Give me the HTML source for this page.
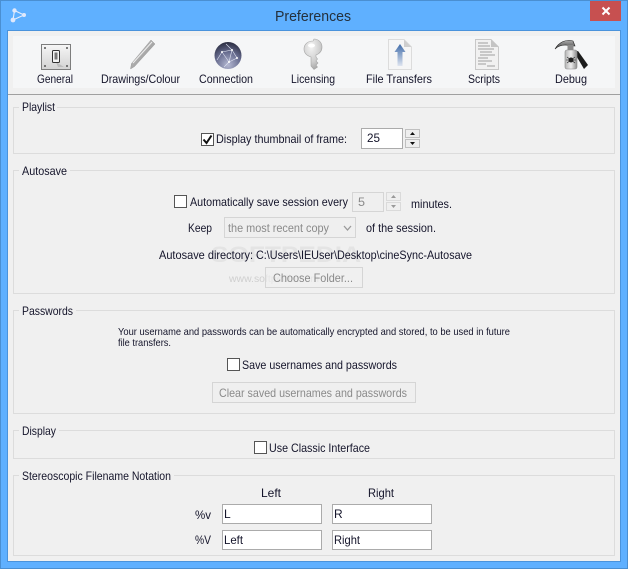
<!DOCTYPE html>
<html><head><meta charset="utf-8"><title>Preferences</title>
<style>
html,body{margin:0;padding:0;background:#5fb0ff;width:628px;height:569px;overflow:hidden}
svg{display:block}
text{font-family:"Liberation Sans",sans-serif;font-size:12px;fill:#14142a}
.g{fill:#8a8a8a}
.gb{fill:none;stroke:#dcdcdc}
.in{fill:#fff;stroke:#ababab}
.d{fill:#efefef;stroke:#d5d5d5}
.s{font-size:10.5px}
</style></head><body>
<svg width="628" height="569" viewBox="0 0 628 569" xmlns="http://www.w3.org/2000/svg">
<defs>
<linearGradient id="pl" x1="0" y1="0" x2="0" y2="1"><stop offset="0" stop-color="#f6f6f6"/><stop offset="1" stop-color="#d2d2d2"/></linearGradient>
<linearGradient id="pen" x1="0" y1="0" x2="1" y2="1"><stop offset="0" stop-color="#cfcfcf"/><stop offset="1" stop-color="#858585"/></linearGradient>
<radialGradient id="gl" cx=".5" cy=".85" r=".85"><stop offset="0" stop-color="#b4b8d2"/><stop offset=".55" stop-color="#686d90"/><stop offset="1" stop-color="#2a2c40"/></radialGradient>
<radialGradient id="ky" cx=".4" cy=".25" r=".85"><stop offset="0" stop-color="#f4f4f4"/><stop offset=".6" stop-color="#cdcdcd"/><stop offset="1" stop-color="#9a9a9a"/></radialGradient>
<linearGradient id="ar" x1="0" y1="0" x2="0" y2="1"><stop offset="0" stop-color="#3f6ba8"/><stop offset="1" stop-color="#dfe5f0"/></linearGradient>
<linearGradient id="cn" x1="0" y1="0" x2="1" y2="0"><stop offset="0" stop-color="#b4b4b4"/><stop offset=".5" stop-color="#eee"/><stop offset="1" stop-color="#8c8c8c"/></linearGradient>
<linearGradient id="hm" x1="0" y1="0" x2="0" y2="1"><stop offset="0" stop-color="#aaa"/><stop offset="1" stop-color="#444"/></linearGradient>
<filter id="soft" x="-10%" y="-10%" width="120%" height="120%"><feGaussianBlur stdDeviation=".35"/></filter>
</defs>

<!-- window frame -->
<rect x="0.5" y="0.5" width="627" height="568" fill="#5fb0ff" stroke="#4a8fd2"/>
<rect x="8" y="31" width="613" height="531" fill="#f0f0f0"/>
<path d="M7.500 561.500V30.500H620.500V561.500Z" fill="none" stroke="#4a93dc"/>

<!-- logo -->
<g stroke="#e8eefc" stroke-width="1.100" fill="none"><path d="M14.500 10.500L24 15L13 20Z"/></g>
<circle cx="14.500" cy="10.500" r="2.200" fill="#dfe8fb"/><circle cx="24" cy="15" r="2" fill="#dfe8fb"/><circle cx="13" cy="20" r="2.400" fill="#dfe8fb"/>

<!-- title + close -->
<text x="275" y="21" style="font-size:15px;fill:#24303c" textLength="76" lengthAdjust="spacingAndGlyphs">Preferences</text>
<rect x="590" y="1" width="31" height="20" fill="#c75050"/>
<path d="M602.500 7.500L609.500 14.500M609.500 7.500L602.500 14.500" stroke="#fff" stroke-width="2"/>

<!-- toolbar -->
<rect x="13" y="36" width="602" height="52" fill="#f5f6f7"/>
<rect x="8" y="94" width="612" height="1" fill="#a0a0a0"/>

<g filter="url(#soft)">
<!-- General icon -->
<rect x="41.500" y="44.500" width="29" height="25" fill="url(#pl)" stroke="#7d7d7d"/>
<circle cx="45" cy="48" r="1" fill="#555"/><circle cx="67" cy="48" r="1" fill="#555"/><circle cx="45" cy="66" r="1" fill="#555"/><circle cx="67" cy="66" r="1" fill="#555"/>
<path d="M56 62L64 67L58 67Z" fill="#bbb"/>
<rect x="52.500" y="50.500" width="7" height="12" rx="1" fill="#f5f5f5" stroke="#333"/>
<rect x="54.500" y="52.500" width="3" height="7" fill="#777"/>

<!-- Pencil icon -->
<path d="M151 40L155 44L134.500 66.500L130.500 69L131.500 63.500Z" fill="url(#pen)" stroke="#9a9a9a" stroke-width=".5"/>
<path d="M152 42L133 63" stroke="#eee" stroke-width="1"/>

<!-- Globe icon -->
<circle cx="228" cy="55.500" r="13.500" fill="url(#gl)"/>
<g stroke="#dfe3f2" stroke-width=".6" fill="none"><path d="M222 52L232 50L237 58L229 62L222 52L217 60M232 50L229 62M229 62L224 67M232 50L226 44"/></g>
<g fill="#fff"><circle cx="222" cy="52" r="1"/><circle cx="232" cy="50" r="1"/><circle cx="237" cy="58" r="1"/><circle cx="229" cy="62" r="1"/></g>

<!-- Key icon -->
<path d="M313 41c-5.500 0-9 3.500-9 8c0 3.500 2.500 6.500 7 8V66l3 3.500l3.500-2.500l-1.500-2l2-2l-2-2l1.500-2l-1.500-2v-2c4-1.500 6-4.500 6-8c0-4.500-3.500-8-8-8Z" fill="url(#ky)" stroke="#a5a5a5" stroke-width=".6"/>
<ellipse cx="311.500" cy="45.500" rx="3.500" ry="2" fill="#fff"/>

<!-- File Transfers icon -->
<path d="M388.500 39.500H404L411.500 47V69.500H388.500Z" fill="#f6f6f6" stroke="#dcdcdc"/>
<path d="M404 39.500V47H411.500Z" fill="#cfcfcf"/>
<path d="M400 44L405.500 52H402.500V66H397.500V52H394.500Z" fill="url(#ar)"/>

<!-- Scripts icon -->
<path d="M475.500 39.500H491L498.500 47V69.500H475.500Z" fill="#f1f1f1" stroke="#c8c8c8"/>
<path d="M491 39.500V47H498.500Z" fill="#c4c4c4"/>
<path d="M478 43h10M478 46h12M478 49h16M480 52h12M480 55h15M478 58h10M478 61h14M478 64h8M487 66h8" stroke="#a0a0a0" stroke-width=".9"/>

<!-- Debug icon -->
<path d="M574 52L578 51L588 65L584 69Z" fill="#1c1c1c"/>
<path d="M555 49C559 42 566 39 573 41L575 46L570 46L566 45C562 45 558 46 555 49Z" fill="url(#hm)" stroke="#222" stroke-width=".6"/>
<rect x="567.500" y="45" width="6" height="6" fill="#8a8a8a"/>
<rect x="565" y="50" width="12" height="19" rx="2" fill="url(#cn)" stroke="#8a8a8a" stroke-width=".6"/>
<circle cx="571" cy="60" r="2.500" fill="#222"/>
<path d="M567 57l8 6M575 57l-8 6M566 60h10" stroke="#222" stroke-width=".6"/>
</g>

<!-- toolbar labels -->
<text x="37" y="83" textLength="36" lengthAdjust="spacingAndGlyphs">General</text>
<text x="101" y="83" textLength="79" lengthAdjust="spacingAndGlyphs">Drawings/Colour</text>
<text x="199" y="83" textLength="54" lengthAdjust="spacingAndGlyphs">Connection</text>
<text x="291" y="83" textLength="44" lengthAdjust="spacingAndGlyphs">Licensing</text>
<text x="366" y="83" textLength="66" lengthAdjust="spacingAndGlyphs">File Transfers</text>
<text x="468" y="83" textLength="32" lengthAdjust="spacingAndGlyphs">Scripts</text>
<text x="555" y="83" textLength="32" lengthAdjust="spacingAndGlyphs">Debug</text>

<!-- group boxes -->
<rect class="gb" x="13.500" y="107.500" width="601" height="46"/>
<rect class="gb" x="13.500" y="170.500" width="601" height="123"/>
<rect class="gb" x="13.500" y="310.500" width="601" height="103"/>
<rect class="gb" x="13.500" y="430.500" width="601" height="28"/>
<rect class="gb" x="13.500" y="475.500" width="601" height="80"/>
<rect x="19" y="102" width="38" height="12" fill="#f0f0f0"/>
<rect x="19" y="165" width="51" height="12" fill="#f0f0f0"/>
<rect x="19" y="305" width="57" height="12" fill="#f0f0f0"/>
<rect x="19" y="425" width="40" height="12" fill="#f0f0f0"/>
<rect x="19" y="470" width="155" height="12" fill="#f0f0f0"/>
<text x="22" y="111" textLength="33" lengthAdjust="spacingAndGlyphs">Playlist</text>
<text x="22" y="175" textLength="45" lengthAdjust="spacingAndGlyphs">Autosave</text>
<text x="22" y="315" textLength="51" lengthAdjust="spacingAndGlyphs">Passwords</text>
<text x="22" y="435" textLength="34" lengthAdjust="spacingAndGlyphs">Display</text>
<text x="22" y="480" textLength="149" lengthAdjust="spacingAndGlyphs">Stereoscopic Filename Notation</text>

<!-- Playlist -->
<rect x="201.500" y="133.500" width="12" height="12" fill="#fff" stroke="#555"/>
<path d="M203.500 139.500L206.500 143L211.500 135.500" fill="none" stroke="#111" stroke-width="2"/>
<text x="216" y="143" textLength="131" lengthAdjust="spacingAndGlyphs">Display thumbnail of frame:</text>
<rect class="in" x="361.500" y="128.500" width="41" height="20"/>
<text x="367" y="142" textLength="13" lengthAdjust="spacingAndGlyphs">25</text>
<rect x="405.500" y="129.500" width="14" height="8" fill="#eee" stroke="#c0c0c0"/>
<rect x="405.500" y="139.500" width="14" height="8" fill="#eee" stroke="#c0c0c0"/>
<path d="M410 135L412.500 132L415 135Z" fill="#111"/><path d="M410 142L412.500 145L415 142Z" fill="#111"/>

<!-- Autosave -->
<rect x="174.500" y="195.500" width="12" height="12" fill="#fff" stroke="#555"/>
<text x="190" y="206" textLength="158" lengthAdjust="spacingAndGlyphs">Automatically save session every</text>
<rect class="d" x="352.500" y="192.500" width="31" height="19"/>
<text x="358" y="206" class="g" textLength="7" lengthAdjust="spacingAndGlyphs">5</text>
<rect x="386.500" y="192.500" width="14" height="8" fill="#efefef" stroke="#dadada"/>
<rect x="386.500" y="202.500" width="14" height="8" fill="#efefef" stroke="#dadada"/>
<path d="M391 198L393.500 195L396 198Z" fill="#999"/><path d="M391 205L393.500 208L396 205Z" fill="#999"/>
<text x="411" y="208" textLength="41" lengthAdjust="spacingAndGlyphs">minutes.</text>
<text x="188" y="232" textLength="24" lengthAdjust="spacingAndGlyphs">Keep</text>
<rect class="d" x="224.500" y="217.500" width="131" height="20"/>
<text x="228" y="232" class="g" textLength="101" lengthAdjust="spacingAndGlyphs">the most recent copy</text>
<path d="M344 226L347.500 230L351 226" fill="none" stroke="#9a9a9a" stroke-width="1.300"/>
<text x="366" y="232" textLength="70" lengthAdjust="spacingAndGlyphs">of the session.</text>
<text x="211" y="262" style="font-size:22px;font-weight:bold;fill:#e4e4e4" textLength="150" lengthAdjust="spacingAndGlyphs">SOFTPEDIA</text>
<text x="159" y="259" textLength="94" lengthAdjust="spacingAndGlyphs">Autosave directory:</text>
<text x="256" y="259" textLength="216" lengthAdjust="spacingAndGlyphs">C:\Users\IEUser\Desktop\cineSync-Autosave</text>
<text x="229" y="282" style="font-size:10px;fill:#cfcfcf" textLength="90" lengthAdjust="spacingAndGlyphs">www.softpedia.com</text>
<rect x="265.500" y="267.500" width="97" height="20" fill="#efefef" fill-opacity=".7" stroke="#d5d5d5"/>
<text x="273" y="282" class="g" textLength="80" lengthAdjust="spacingAndGlyphs">Choose Folder...</text>

<!-- Passwords -->
<text x="118" y="335" class="s" textLength="392" lengthAdjust="spacingAndGlyphs">Your username and passwords can be automatically encrypted and stored, to be used  in future</text>
<text x="118" y="346" class="s" textLength="53" lengthAdjust="spacingAndGlyphs">file transfers.</text>
<rect x="227.500" y="358.500" width="12" height="12" fill="#fff" stroke="#555"/>
<text x="242" y="369" textLength="155" lengthAdjust="spacingAndGlyphs">Save usernames and passwords</text>
<rect class="d" x="212.500" y="382.500" width="203" height="20"/>
<text x="219" y="397" class="g" textLength="188" lengthAdjust="spacingAndGlyphs">Clear saved usernames and passwords</text>

<!-- Display -->
<rect x="254.500" y="441.500" width="12" height="12" fill="#fff" stroke="#555"/>
<text x="269" y="452" textLength="101" lengthAdjust="spacingAndGlyphs">Use Classic Interface</text>

<!-- Stereo -->
<text x="261" y="497" textLength="20" lengthAdjust="spacingAndGlyphs">Left</text>
<text x="368" y="497" textLength="26" lengthAdjust="spacingAndGlyphs">Right</text>
<text x="195" y="519" textLength="16" lengthAdjust="spacingAndGlyphs">%v</text>
<text x="195" y="544" textLength="16" lengthAdjust="spacingAndGlyphs">%V</text>
<rect class="in" x="222.500" y="504.500" width="99" height="19"/>
<rect class="in" x="332.500" y="504.500" width="99" height="19"/>
<rect class="in" x="222.500" y="530.500" width="99" height="19"/>
<rect class="in" x="332.500" y="530.500" width="99" height="19"/>
<text x="224" y="518">L</text>
<text x="334" y="518">R</text>
<text x="224" y="544" textLength="19" lengthAdjust="spacingAndGlyphs">Left</text>
<text x="334" y="544" textLength="26" lengthAdjust="spacingAndGlyphs">Right</text>
</svg>
</body></html>
